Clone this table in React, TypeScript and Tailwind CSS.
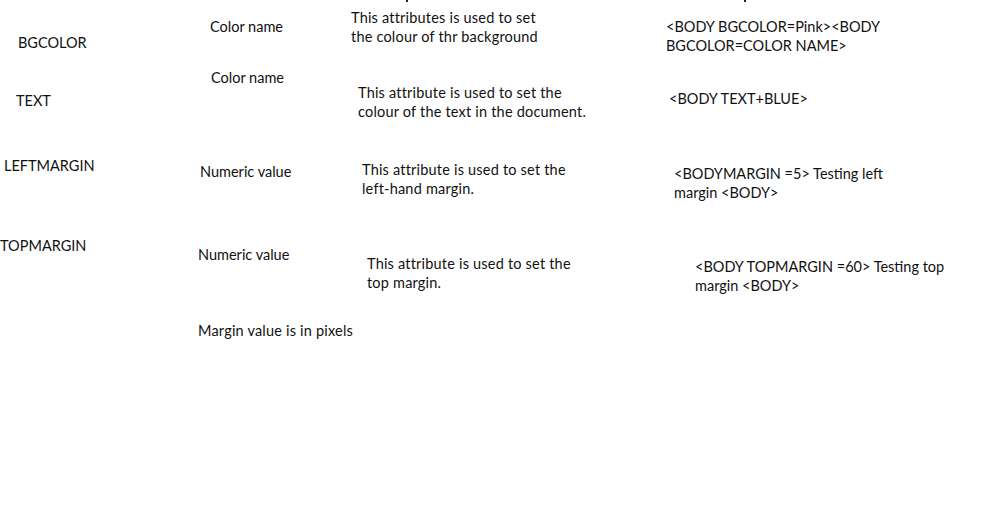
const font = "font-['Lato','Liberation_Sans',sans-serif]";

function Cell({ pl, pt, children, wide }: { pl: string; pt: string; children: React.ReactNode; wide?: boolean }) {
  return <div className={`${pl} ${pt} whitespace-nowrap ${wide ? "tracking-[0.2px]" : ""}`}>{children}</div>;
}

export default function App() {
  return (
    <div className={`w-[999px] h-[525px] bg-white text-[#111] text-[14.5px] leading-[19px] overflow-hidden ${font}`}>
      {/* descenders of text cut off above */}
      <div className="relative h-0">
        <div className="absolute left-[406px] top-0 w-[2px] h-[2px] bg-[#222]" />
        <div className="absolute left-[744px] top-0 w-[2px] h-[2px] bg-[#222]" />
      </div>

      <div className="grid grid-cols-[198px_153px_315px_333px] h-[68px]">
        <Cell pl="pl-[18px]" pt="pt-[33px]">BGCOLOR</Cell>
        <Cell pl="pl-[12px]" pt="pt-[17px]">Color name</Cell>
        <Cell pl="pl-0" pt="pt-[8px]" wide>
          This attributes is used to set
          <br />
          the colour of thr background
        </Cell>
        <Cell pl="pl-0" pt="pt-[17px]">
          &lt;BODY BGCOLOR=Pink&gt;&lt;BODY
          <br />
          BGCOLOR=COLOR NAME&gt;
        </Cell>
      </div>

      <div className="grid grid-cols-[198px_153px_315px_333px] h-[87px]">
        <Cell pl="pl-[16px]" pt="pt-[23px]">TEXT</Cell>
        <Cell pl="pl-[13px]" pt="pt-0">Color name</Cell>
        <Cell pl="pl-[7px]" pt="pt-[15px]" wide>
          This attribute is used to set the
          <br />
          colour of the text in the document.
        </Cell>
        <Cell pl="pl-[3px]" pt="pt-[21px]">&lt;BODY TEXT+BLUE&gt;</Cell>
      </div>

      <div className="grid grid-cols-[198px_153px_315px_333px] h-[81px]">
        <Cell pl="pl-[4px]" pt="pt-px">LEFTMARGIN</Cell>
        <Cell pl="pl-[2px]" pt="pt-[7px]">Numeric value</Cell>
        <Cell pl="pl-[11px]" pt="pt-[5px]" wide>
          This attribute is used to set the
          <br />
          left-hand margin.
        </Cell>
        <Cell pl="pl-[8px]" pt="pt-[9px]">
          &lt;BODYMARGIN =5&gt; Testing left
          <br />
          margin &lt;BODY&gt;
        </Cell>
      </div>

      <div className="grid grid-cols-[198px_153px_315px_333px] h-[84px]">
        <Cell pl="pl-0" pt="pt-0">TOPMARGIN</Cell>
        <Cell pl="pl-0" pt="pt-[9px]">Numeric value</Cell>
        <Cell pl="pl-[16px]" pt="pt-[18px]" wide>
          This attribute is used to set the
          <br />
          top margin.
        </Cell>
        <Cell pl="pl-[29px]" pt="pt-[21px]">
          &lt;BODY TOPMARGIN =60&gt; Testing top
          <br />
          margin &lt;BODY&gt;
        </Cell>
      </div>

      <div className="grid grid-cols-[198px_153px_315px_333px]">
        <div />
        <Cell pl="pl-0" pt="pt-px" wide>Margin value is in pixels</Cell>
      </div>
    </div>
  );
}
